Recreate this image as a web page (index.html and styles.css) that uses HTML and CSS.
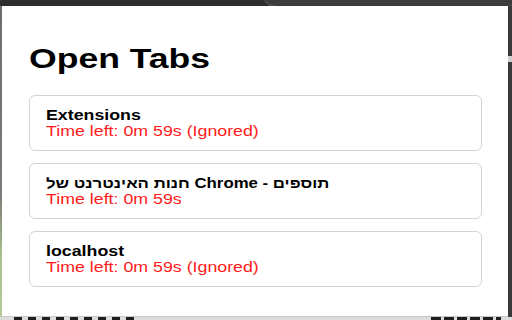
FILE: index.html
```html
<!DOCTYPE html>
<html>
<head>
<meta charset="utf-8">
<link rel="stylesheet" href="styles.css">
</head>
<body>
<div class="topbar"><div class="tab-arc"></div></div>
<div class="middle">
  <div class="edge-left"></div>
  <div class="popup">
    <h1 class="title"><span class="wide">Open Tabs</span></h1>
    <div class="card">
      <div class="name"><span class="wide">Extensions</span></div>
      <div class="time"><span class="wide">Time left: 0m 59s (Ignored)</span></div>
    </div>
    <div class="card">
      <div class="name"><span class="wide wide-he" dir="rtl">תוספים - Chrome חנות האינטרנט של</span></div>
      <div class="time"><span class="wide">Time left: 0m 59s</span></div>
    </div>
    <div class="card">
      <div class="name"><span class="wide">localhost</span></div>
      <div class="time"><span class="wide">Time left: 0m 59s (Ignored)</span></div>
    </div>
  </div>
  <div class="edge-right"></div>
</div>
<div class="bottombar">
  <div class="blk blk-a"></div>
  <div class="blk blk-b"></div>
</div>
</body>
</html>
```
FILE: styles.css
```css
html, body {
  margin: 0;
  padding: 0;
  width: 512px;
  height: 320px;
  overflow: hidden;
}
body {
  display: flex;
  flex-direction: column;
  background: #3a3a3a;
  font-family: "Liberation Sans", Arial, "Noto Sans", sans-serif;
}
.topbar {
  height: 6px;
  background: #2e2e2e;
  display: flex;
  justify-content: flex-end;
  overflow: hidden;
}
.tab-arc {
  width: 260px;
  height: 14px;
  margin-top: -8px;
  margin-right: -10px;
  border-radius: 0 0 40px 40px;
  border-bottom: 2px solid #5a5a5a;
  background: #3c3c3c;
}
.middle {
  flex: 1;
  display: flex;
}
.edge-left {
  width: 2px;
  background: linear-gradient(#6e6e6e 0, #7a7a7a 60%, #a9c08a 80%, #b6ca98 100%);
}
.edge-right {
  width: 4px;
  background: linear-gradient(#3a3a3a 0, #3a3a3a 50px, #cfcfcf 50px, #cfcfcf 56px, #3a3a3a 56px, #3a3a3a 100%);
}
.popup {
  flex: 1;
  background: #ffffff;
  padding: 0 26px 0 27px;
  border-bottom: 1px solid #c8c8c8;
}
.wide {
  display: inline-block;
  transform: scaleX(1.27);
  transform-origin: left center;
  white-space: nowrap;
}
.wide-he {
  transform: scaleX(1.2);
}
.title {
  margin: 37px 0 20px 0;
  font-size: 28px;
  font-weight: bold;
  line-height: 32px;
  color: #000;
}
.card {
  border: 1px solid #d3d3d3;
  border-radius: 6px;
  padding: 11px 16px;
  margin-bottom: 12px;
}
.name {
  font-size: 14px;
  font-weight: bold;
  line-height: 16px;
  color: #000;
}
.time {
  font-size: 14px;
  line-height: 16px;
  color: #ff1a1a;
}
.bottombar {
  height: 3px;
  background: #dcdcdc;
  display: flex;
  gap: 0;
}
.blk {
  height: 3px;
  background: #1e1e1e;
}
.blk-a {
  width: 125px;
  margin-left: 14px;
  background: repeating-linear-gradient(90deg, #1e1e1e 0 8px, #dcdcdc 8px 14px);
}
.blk-b {
  width: 70px;
  margin-left: 292px;
  background: repeating-linear-gradient(90deg, #1e1e1e 0 10px, #dcdcdc 10px 13px);
}
```
